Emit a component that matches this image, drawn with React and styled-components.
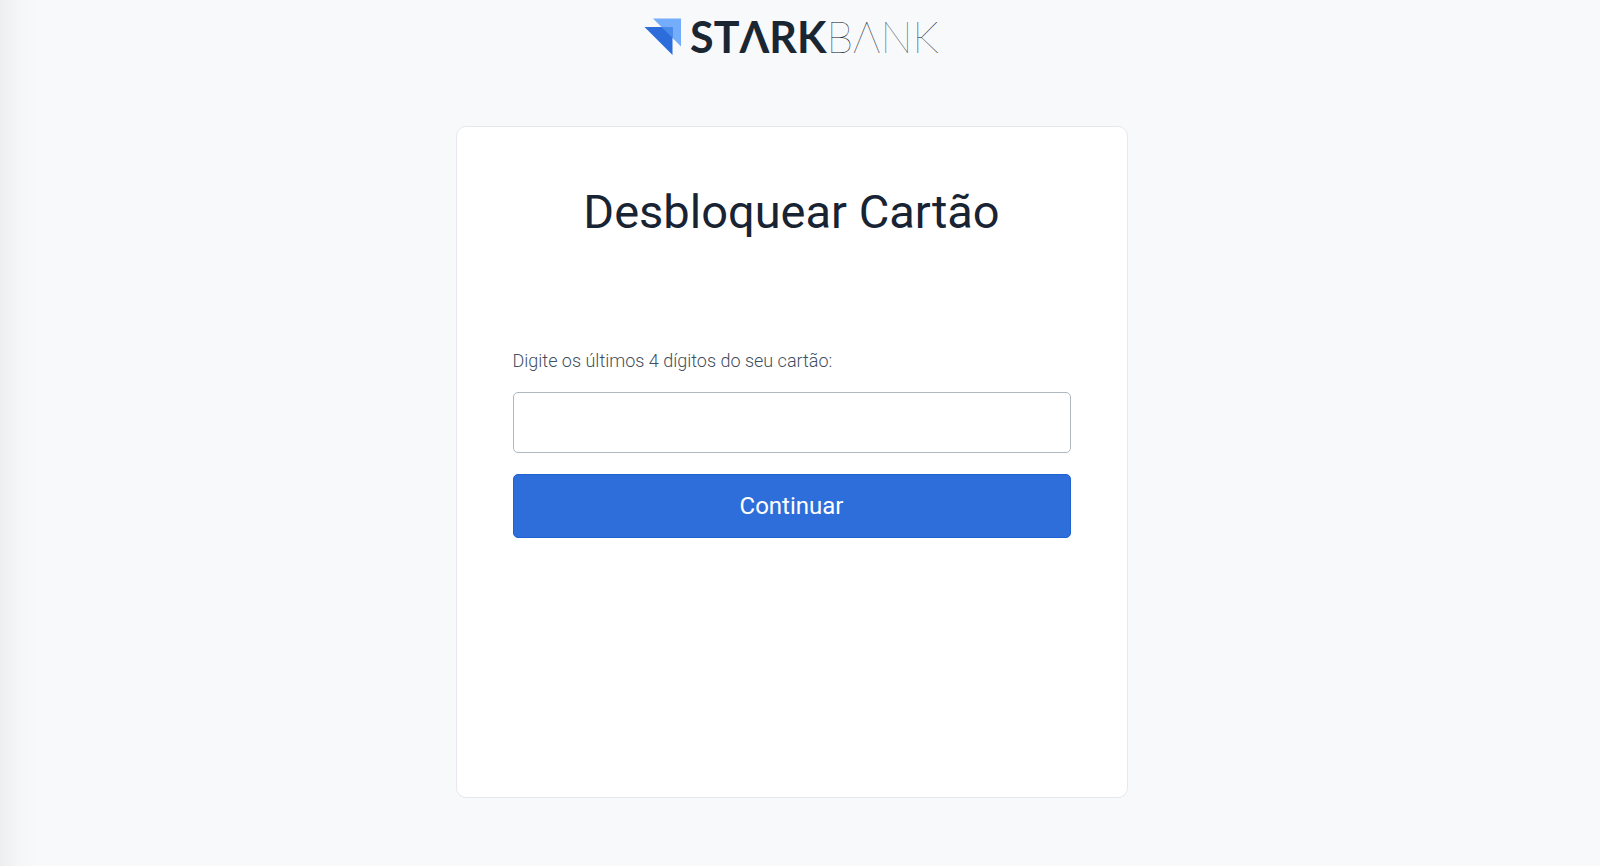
import React, { useState } from "react";
import styled, { createGlobalStyle } from "styled-components";

const GlobalStyle = createGlobalStyle`
  * {
    box-sizing: border-box;
  }

  body {
    margin: 0;
    background-color: #f8f9fb;
    font-family: Roboto, "Liberation Sans", sans-serif;
    color: #182433;
    -webkit-font-smoothing: antialiased;
  }
`;

function LogoMark() {
  return (
    <svg width="38" height="38" viewBox="0 0 38 38" aria-hidden="true">
      <polygon points="9,0.5 37,0.5 37,28.5" fill="#73adfb" />
      <polygon points="0.5,9 28.5,9 28.5,37" fill="#2d6cdb" />
      <polygon points="17.5,9 28.5,9 28.5,20" fill="#488ae9" />
    </svg>
  );
}

export default function App() {
  const [digits, setDigits] = useState(""); // Last digits of the card

  const handleSubmit = (e) => {
    e.preventDefault();
  };

  return (
    <Page>
      <GlobalStyle />
      <Logo href="#" aria-label="Stark Bank">
        <LogoMark />
        <Wordmark>
          <b>STΛRK</b>
          <span>BΛNK</span>
        </Wordmark>
      </Logo>
      <Card>
        <Title>Desbloquear Cartão</Title>
        <Form onSubmit={handleSubmit}>
          <Label htmlFor="digits">Digite os últimos 4 dígitos do seu cartão:</Label>
          <Input
            id="digits"
            type="text"
            inputMode="numeric"
            maxLength={4}
            value={digits}
            onChange={(e) => setDigits(e.target.value)}
          />
          <Button type="submit">Continuar</Button>
        </Form>
      </Card>
    </Page>
  );
}

const Page = styled.main`
  min-height: 100vh;
  display: flex;
  flex-direction: column;
  align-items: center;
  gap: 70px;
  padding: 18px 17px 48px 0;
  background: linear-gradient(to right, #eceeef, #f3f5f7 16px, #f8f9fb 36px);
`;

const Logo = styled.a`
  display: flex;
  align-items: center;
  gap: 8px;
  height: 38px;
  color: #1a2733;
  text-decoration: none;
`;

const Wordmark = styled.span`
  display: flex;
  font-family: Lato, "Liberation Sans", sans-serif;
  font-size: 43px;
  line-height: 36px;

  b {
    font-weight: 700;
  }

  span {
    font-weight: 100;
    color: #000814;
  }
`;

const Card = styled.section`
  width: 100%;
  max-width: 672px;
  min-height: 672px;
  padding: 56px;
  background-color: #ffffff;
  border: 1px solid #e6e8ee;
  border-radius: 10px;
`;

const Title = styled.h1`
  margin: 0;
  font-size: 47px;
  font-weight: 400;
  line-height: 58px;
  text-align: center;
`;

const Form = styled.form`
  display: flex;
  flex-direction: column;
  margin-top: 106px;
`;

const Label = styled.label`
  margin-bottom: 17px;
  font-size: 18px;
  font-weight: 300;
  line-height: 28px;
  color: #3f4f60;
`;

const Input = styled.input`
  width: 100%;
  height: 61px;
  padding: 0 16px;
  font: inherit;
  font-size: 24px;
  color: inherit;
  background-color: #ffffff;
  border: 1px solid #b0b8c0;
  border-radius: 5px;
  outline: none;

  &:focus {
    border-color: #2d6cdb;
  }
`;

const Button = styled.button`
  width: 100%;
  height: 64px;
  margin-top: 21px;
  font: inherit;
  font-size: 24px;
  color: #ffffff;
  background-color: #2e6eda;
  border: 1px solid #1f62d2;
  border-radius: 5px;
  cursor: pointer;
`;
